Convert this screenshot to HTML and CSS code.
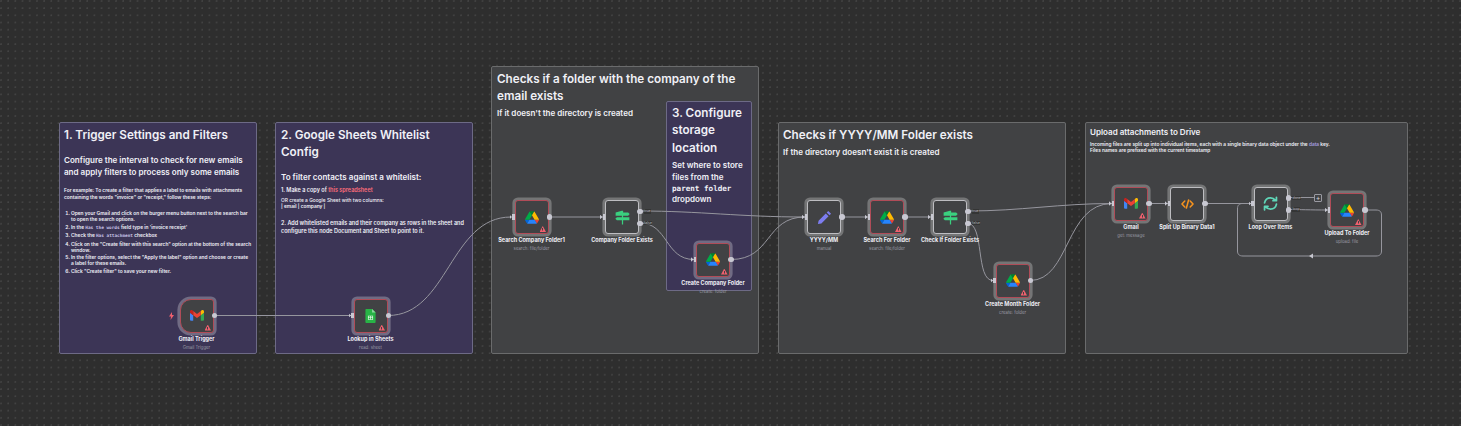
FILE: index.html
```html
<!DOCTYPE html>
<html lang="en">
<head>
    <meta charset="UTF-8">
    <title>Workflow</title>
    <link rel="stylesheet" href="styles.css">
</head>
<body>
<svg class="defs" width="0" height="0">
    <symbol id="i-gmail" viewBox="0 0 24 18">
        <path fill="#4285f4" d="M1.6 18h3.9V8.5L0 4.4v12c0 .9.7 1.6 1.6 1.6"/>
        <path fill="#34a853" d="M18.5 18h3.9c.9 0 1.6-.7 1.6-1.6v-12l-5.500 4.100"/>
        <path fill="#fbbc04" d="M18.500 1.400v7.100L24 4.400V2.200C24 .2 21.700-1 20.100.2"/>
        <path fill="#ea4335" d="M5.500 8.500V1.400L12 6.300l6.500-4.900v7.100L12 13.400"/>
        <path fill="#c5221f" d="M0 2.200v2.200l5.500 4.100V1.400L3.900.2C2.300-1 0 .2 0 2.200"/>
    </symbol>
    <symbol id="i-drive" viewBox="0 0 87.300 78">
        <path fill="#0066da" d="M6.600 66.850l3.850 6.650c.8 1.400 1.950 2.500 3.300 3.300l13.750-23.800H0c0 1.550.4 3.100 1.200 4.500z"/>
        <path fill="#00ac47" d="M43.650 25L29.900 1.200c-1.350.8-2.500 1.900-3.300 3.300L1.200 48.500C.4 49.900 0 51.450 0 53h27.500z"/>
        <path fill="#ea4335" d="M73.550 76.800c1.350-.8 2.500-1.900 3.300-3.300l1.600-2.750L86.100 57.500c.8-1.400 1.200-2.950 1.200-4.500H59.800l5.850 11.500z"/>
        <path fill="#00832d" d="M43.650 25L57.400 1.200C56.050.4 54.500 0 52.900 0H34.400c-1.600 0-3.150.45-4.500 1.200z"/>
        <path fill="#2684fc" d="M59.800 53H27.500L13.750 76.800c1.350.8 2.900 1.200 4.500 1.200h50.800c1.600 0 3.150-.45 4.500-1.200z"/>
        <path fill="#ffba00" d="M73.400 26.500L60.700 4.500c-.8-1.400-1.950-2.500-3.300-3.300L43.650 25 59.800 53h27.450c0-1.550-.4-3.100-1.200-4.500z"/>
    </symbol>
    <symbol id="i-sheets" viewBox="0 0 16 22">
        <path fill="#28b446" d="M1.500 0H10.500L16 5.500V20.500C16 21.300 15.300 22 14.500 22H1.500C.7 22 0 21.300 0 20.500V1.500C0 .7.7 0 1.500 0z"/>
        <path fill="#8ed8a0" d="M10.500 0L16 5.500H10.500z"/>
        <path fill="#fff" d="M4 10.500h8v6.500H4zM5 11.500v1.800h2.500v-1.800zM8.500 11.500v1.800H11v-1.800zM5 14.200V16h2.500v-1.800zM8.500 14.200V16H11v-1.800z" fill-rule="evenodd"/>
    </symbol>
    <symbol id="i-if" viewBox="0 0 24 24">
        <path fill="#3ad07f" d="M11 1h2v3h8l2.500 2.500L21 9H1V4zM3 11.500h20v5H3L.5 14zM11 9h2v2.500h-2zM11 16.500h2v6.500h-2z"/>
    </symbol>
    <symbol id="i-pencil" viewBox="0 0 24 24">
        <path fill="#7d7df0" d="M18 1.500l4.500 4.500-2.500 2.500L15.500 4zM14 5.500L18.500 10 7 21.500l-5.500 1 1-5.500z"/>
    </symbol>
    <symbol id="i-code" viewBox="0 0 24 18">
        <path fill="none" stroke="#f7931e" stroke-width="2.800" stroke-linecap="round" stroke-linejoin="round" d="M7 3.500L1.800 9 7 14.500M17 3.500L22.200 9 17 14.500M14 1.500L10 16.500"/>
    </symbol>
    <symbol id="i-loop" viewBox="0 0 24 24">
        <path fill="none" stroke="#5fd6b8" stroke-width="2.800" stroke-linecap="round" stroke-linejoin="round" d="M2.500 11C3.500 6 7.500 3 12 3c3.500 0 6 1.500 8 4M21.500 2v5.500H16M21.500 13c-1 5-5 8-9.500 8-3.500 0-6-1.500-8-4M2.500 22v-5.500H8"/>
    </symbol>
</svg>

<div class="canvas">
    <section class="note note-gray note-company">
        <h1>Checks if a folder with the company of the email exists</h1>
        <h3>If it doesn't the directory is created</h3>
    </section>
    <section class="note note-purple note-trigger">
        <h1>1. Trigger Settings and Filters</h1>
        <h2>Configure the interval to check for new emails and apply filters to process only some emails</h2>
        <p>For example: To create a filter that applies a label to emails with attachments containing the words "invoice" or "receipt," follow these steps:</p>
        <ol>
            <li>Open your Gmail and click on the burger menu button next to the search bar to open the search options.</li>
            <li>In the <code>Has the words</code> field type in 'invoice receipt'</li>
            <li>Check the <code>Has attachment</code> checkbox</li>
            <li>Click on the "Create filter with this search" option at the bottom of the search window.</li>
            <li>In the filter options, select the "Apply the label" option and choose or create a label for these emails.</li>
            <li>Click "Create filter" to save your new filter.</li>
        </ol>
    </section>
    <section class="note note-purple note-sheets">
        <h1>2. Google Sheets Whitelist Config</h1>
        <h3 class="sheets-head">To filter contacts against a whitelist:</h3>
        <p class="strong">1. Make a copy of <a>this spreadsheet</a></p>
        <p class="or-line">OR create a Google Sheet with two columns:<br><b>| email | company |</b></p>
        <p class="strong">2. Add whitelisted emails and their company as rows in the sheet and configure this node Document and Sheet to point to it.</p>
    </section>
    <section class="note note-purple note-storage">
        <h1>3. Configure storage location</h1>
        <h3>Set where to store files from the <code>parent folder</code> dropdown</h3>
    </section>
    <section class="note note-gray note-month">
        <h1>Checks if YYYY/MM Folder exists</h1>
        <h3>If the directory doesn't exist it is created</h3>
    </section>
    <section class="note note-gray note-upload">
        <h2>Upload attachments to Drive</h2>
        <p>Incoming files are split up into individual items, each with a single binary data object under the <code>data</code> key.<br>Files names are prefixed with the current timestamp</p>
    </section>

    <svg class="wires" width="1461" height="426" viewBox="0 0 1461 426">
        <path d="M214 315.500H351"/>
        <path d="M388 315.500C448 315.500 450 217 511 217"/>
        <path d="M549 217H603"/>
        <path d="M640 211C700 211 740 217 805 217"/>
        <path d="M640 223C668 223 665 259.500 694 259.500"/>
        <path d="M731 259.500C772 259.500 765 217 805 217"/>
        <path d="M842 217H868"/>
        <path d="M905 217H931"/>
        <path d="M968 211C1020 211 1060 203.500 1112 203.500"/>
        <path d="M967 223C985 223 975 280.500 993 280.500"/>
        <path d="M1030 280.500C1070 280.500 1065 203.500 1112 203.500"/>
        <path d="M1149 203.500H1168"/>
        <path d="M1205 203.500H1251"/>
        <path d="M1288 197.500H1314"/>
        <path d="M1288 209.500C1300 209.500 1310 210 1328 210"/>
        <path d="M1365 210H1376C1380 210 1381.500 212 1381.500 215V251C1381.500 254 1380 256 1376 256H1243C1239 256 1237.500 254 1237.500 251V209C1237.500 205 1239 203.500 1243 203.500H1251"/>
        <path class="wire-head" d="M1313 253.500V258.500L1309 256z"/>
    </svg>

    <div class="node node-trigger-gmail trigger warn">
        <div class="box"><svg class="icon gmail"><use href="#i-gmail"/></svg></div>
        <span class="bolt">
            <svg width="5" height="8" viewBox="0 0 5 8"><path fill="#f0606e" d="M3 0L0 4.500h2L1.500 8 5 3H3z"/></svg>
        </span>
        <i class="out"></i>
        <strong>Gmail Trigger</strong><small>Gmail Trigger</small>
    </div>
    <div class="node node-lookup warn">
        <div class="box"><svg class="icon sheets"><use href="#i-sheets"/></svg></div>
        <i class="in"></i><i class="out"></i>
        <strong>Lookup in Sheets</strong><small>read: sheet</small>
    </div>
    <div class="node node-search-company warn">
        <div class="box"><svg class="icon drive"><use href="#i-drive"/></svg></div>
        <i class="in"></i><i class="out"></i>
        <strong>Search Company Folder1</strong><small>search: file/folder</small>
    </div>
    <div class="node node-company-exists">
        <div class="box"><svg class="icon"><use href="#i-if"/></svg></div>
        <i class="in"></i><i class="out top"></i><i class="out bottom"></i>
        <em class="port-true">true</em><em class="port-false">false</em>
        <strong>Company Folder Exists</strong>
    </div>
    <div class="node node-create-company warn">
        <div class="box"><svg class="icon drive"><use href="#i-drive"/></svg></div>
        <i class="in"></i><i class="out"></i>
        <strong>Create Company Folder</strong><small>create: folder</small>
    </div>
    <div class="node node-yyyy">
        <div class="box"><svg class="icon"><use href="#i-pencil"/></svg></div>
        <i class="in"></i><i class="out"></i>
        <strong>YYYY/MM</strong><small>manual</small>
    </div>
    <div class="node node-search-folder warn">
        <div class="box"><svg class="icon drive"><use href="#i-drive"/></svg></div>
        <i class="in"></i><i class="out"></i>
        <strong>Search For Folder</strong><small>search: file/folder</small>
    </div>
    <div class="node node-check-folder">
        <div class="box"><svg class="icon"><use href="#i-if"/></svg></div>
        <i class="in"></i><i class="out top"></i><i class="out bottom"></i>
        <em class="port-true">true</em><em class="port-false">false</em>
        <strong>Check If Folder Exists</strong>
    </div>
    <div class="node node-create-month warn">
        <div class="box"><svg class="icon drive"><use href="#i-drive"/></svg></div>
        <i class="in"></i><i class="out"></i>
        <strong>Create Month Folder</strong><small>create: folder</small>
    </div>
    <div class="node node-gmail warn">
        <div class="box"><svg class="icon gmail"><use href="#i-gmail"/></svg></div>
        <i class="in"></i><i class="out"></i>
        <strong>Gmail</strong><small>get: message</small>
    </div>
    <div class="node node-split">
        <div class="box"><svg class="icon code"><use href="#i-code"/></svg></div>
        <i class="in"></i><i class="out"></i>
        <strong>Split Up Binary Data1</strong>
    </div>
    <div class="node node-loop">
        <div class="box"><svg class="icon"><use href="#i-loop"/></svg></div>
        <i class="in"></i><i class="out top"></i><i class="out bottom"></i>
        <em class="port-true">done</em><em class="port-false">loop</em>
        <strong>Loop Over Items</strong>
    </div>
    <div class="plus">+</div>
    <div class="node node-upload warn">
        <div class="box"><svg class="icon drive"><use href="#i-drive"/></svg></div>
        <i class="in"></i><i class="out"></i>
        <strong>Upload To Folder</strong><small>upload: file</small>
    </div>
</div>
</body>
</html>
```

FILE: styles.css
```css
* {
    padding: 0;
    margin: 0;
    box-sizing: border-box;
}

html, body {
    width: 1461px;
    height: 426px;
    overflow: hidden;
}

body {
    font-family: Inter, "Open Sans", sans-serif;
    color: #f0f0f6;
}

.defs {
    position: absolute;
}

.canvas {
    position: relative;
    width: 1461px;
    height: 426px;
    background-color: #2e2e2e;
    background-image: radial-gradient(circle at 1px 1px, #444 0.6px, transparent 1px);
    background-size: 7.2px 7.2px;
}

/* sticky notes */
.note {
    position: absolute;
    padding: 4px;
    border: 1px solid;
    border-radius: 2px;
}

.note-gray {
    background: #414244;
    border-color: #6a6b6c;
}

.note-purple {
    background: #3c3556;
    border-color: #6d6a86;
}

.note-trigger { left: 59px; top: 122px; width: 198px; height: 232px; }
.note-sheets { left: 275px; top: 122px; width: 198px; height: 232px; padding-left: 5px; }
.note-company { left: 491px; top: 66px; width: 268px; height: 288px; padding: 3.500px 5px; }
.note-storage { left: 666px; top: 101px; width: 86px; height: 190px; padding: 3px 4px 4px 5px; }
.note-month { left: 778px; top: 122px; width: 288px; height: 232px; }
.note-upload { left: 1085px; top: 122px; width: 323px; height: 232px; }

.note h1 {
    font-size: 11.700px;
    line-height: 17.300px;
    font-weight: 600;
}

.note h2, .note h3 {
    font-size: 8.050px;
    line-height: 11.300px;
    font-weight: 600;
}

.note p {
    font-size: 4.850px;
    line-height: 7.300px;
    font-weight: 600;
}

.note li {
    margin-bottom: 1.500px;
    font-size: 4.850px;
    line-height: 6px;
    font-weight: 600;
}

.note code {
    font-family: "DejaVu Sans Mono", monospace;
    font-size: 4.400px;
    color: #c9c3e6;
}

.note ol {
    margin-top: 9.300px;
    padding-left: 7px;
}

.note-trigger h2 {
    margin-top: 11px;
}

.note-trigger p {
    margin-top: 8.700px;
}

.note-sheets .sheets-head {
    margin-top: 10.700px;
}

.note-sheets .strong {
    margin-top: 2.200px;
    font-size: 5.500px;
    line-height: 8.200px;
    font-weight: 600;
}

.note-sheets .or-line {
    margin-top: 2.600px;
    margin-bottom: 9px;
    font-weight: 500;
    line-height: 6.600px;
}

.note-sheets a {
    color: #ff6d7a;
}

.note-sheets b {
    font-weight: 600;
}

.note-company h3 {
    margin-top: 3.200px;
}

.note-storage h3 {
    margin-top: 3.500px;
}

.note-storage h3 code {
    font-size: 7.600px;
    color: #f0f0f6;
}

.note-month h3 {
    margin-top: 3px;
}

.note-upload p {
    margin-top: 2.700px;
    font-size: 4.800px;
    line-height: 6.100px;
}

.note-upload code {
    font-family: Inter, sans-serif;
    font-size: 4.800px;
    color: #a79fe0;
}

/* connections */
.wires {
    position: absolute;
    left: 0;
    top: 0;
}

.wires path {
    fill: none;
    stroke: #96969e;
    stroke-width: 1px;
}

.wires .wire-head {
    fill: #c6c6cf;
    stroke: none;
}

/* nodes */
.node {
    position: absolute;
    display: flex;
    flex-direction: column;
    align-items: center;
    width: 39px;
}

.box {
    display: flex;
    align-items: center;
    justify-content: center;
    flex: none;
    width: 34px;
    height: 34px;
    margin: 2.500px;
    background: #414244;
    border: 1px solid #bdbdc1;
    border-radius: 3px;
    box-shadow: 0 0 0 2.600px rgba(255, 255, 255, 0.27);
}

.node.warn .box {
    border-color: #b04c58;
}

.node.trigger .box {
    border-radius: 11px 3px 3px 11px;
}

.node.warn::after {
    content: "";
    position: absolute;
    right: 5px;
    top: 28.500px;
    width: 6.500px;
    height: 6px;
    background: linear-gradient(#414244, #414244) 50% 65% / 1px 2.500px no-repeat, #f0606e;
    clip-path: polygon(50% 0, 100% 100%, 0 100%);
}

.icon {
    width: 15px;
    height: 15px;
}

.gmail {
    width: 14px;
    height: 11px;
}

.sheets {
    width: 11px;
    height: 14px;
}

.code {
    width: 13px;
    height: 10px;
}

.drive {
    width: 14px;
    height: 13px;
}

.node strong {
    margin-top: 0.500px;
    font-size: 5.500px;
    line-height: 6.500px;
    font-weight: 700;
    white-space: nowrap;
}

.node small {
    margin-top: 2.500px;
    font-size: 4.300px;
    line-height: 6px;
    color: #9b9ba5;
    white-space: nowrap;
}

.node em {
    position: absolute;
    left: 41px;
    padding: 0 0.500px;
    background: rgba(46, 46, 46, 0.65);
    font-style: normal;
    font-size: 3.500px;
    line-height: 4.500px;
    color: #b0b0b8;
}

.port-true { top: 11.700px; }
.port-false { top: 23.300px; }

.out {
    position: absolute;
    right: -1px;
    top: 16.700px;
    width: 5.500px;
    height: 5.500px;
    background: #c8c8d2;
    border-radius: 50%;
}

.out.top { top: 11px; }
.out.bottom { top: 23px; }

.in {
    position: absolute;
    left: 0;
    top: 16.800px;
    width: 2.500px;
    height: 5.500px;
    background: #c8c8d2;
}

.in::before {
    content: "";
    position: absolute;
    left: -2.500px;
    top: 0.500px;
    width: 2.500px;
    height: 4.500px;
    background: #c8c8d2;
    clip-path: polygon(0 0, 100% 50%, 0 100%);
}

.bolt {
    position: absolute;
    left: -8px;
    top: 15.500px;
    display: flex;
}

.plus {
    position: absolute;
    left: 1314px;
    top: 194px;
    width: 8px;
    height: 8px;
    border: 1px solid #9a9aa2;
    border-radius: 1px;
    background: #414244;
    font-size: 7px;
    line-height: 6px;
    text-align: center;
    color: #d0d0d6;
}

.node-trigger-gmail { left: 177px; top: 296px; }
.node-lookup { left: 351px; top: 296px; }
.node-search-company { left: 512px; top: 197.500px; }
.node-company-exists { left: 602.500px; top: 197.500px; }
.node-create-company { left: 693.500px; top: 240px; }
.node-yyyy { left: 804.500px; top: 197.500px; }
.node-search-folder { left: 867.500px; top: 197.500px; }
.node-check-folder { left: 930.500px; top: 197.500px; }
.node-create-month { left: 993px; top: 261px; }
.node-gmail { left: 1111.500px; top: 184px; }
.node-split { left: 1167.500px; top: 184px; }
.node-loop { left: 1251px; top: 184px; }
.node-upload { left: 1327.500px; top: 190.500px; }
```
